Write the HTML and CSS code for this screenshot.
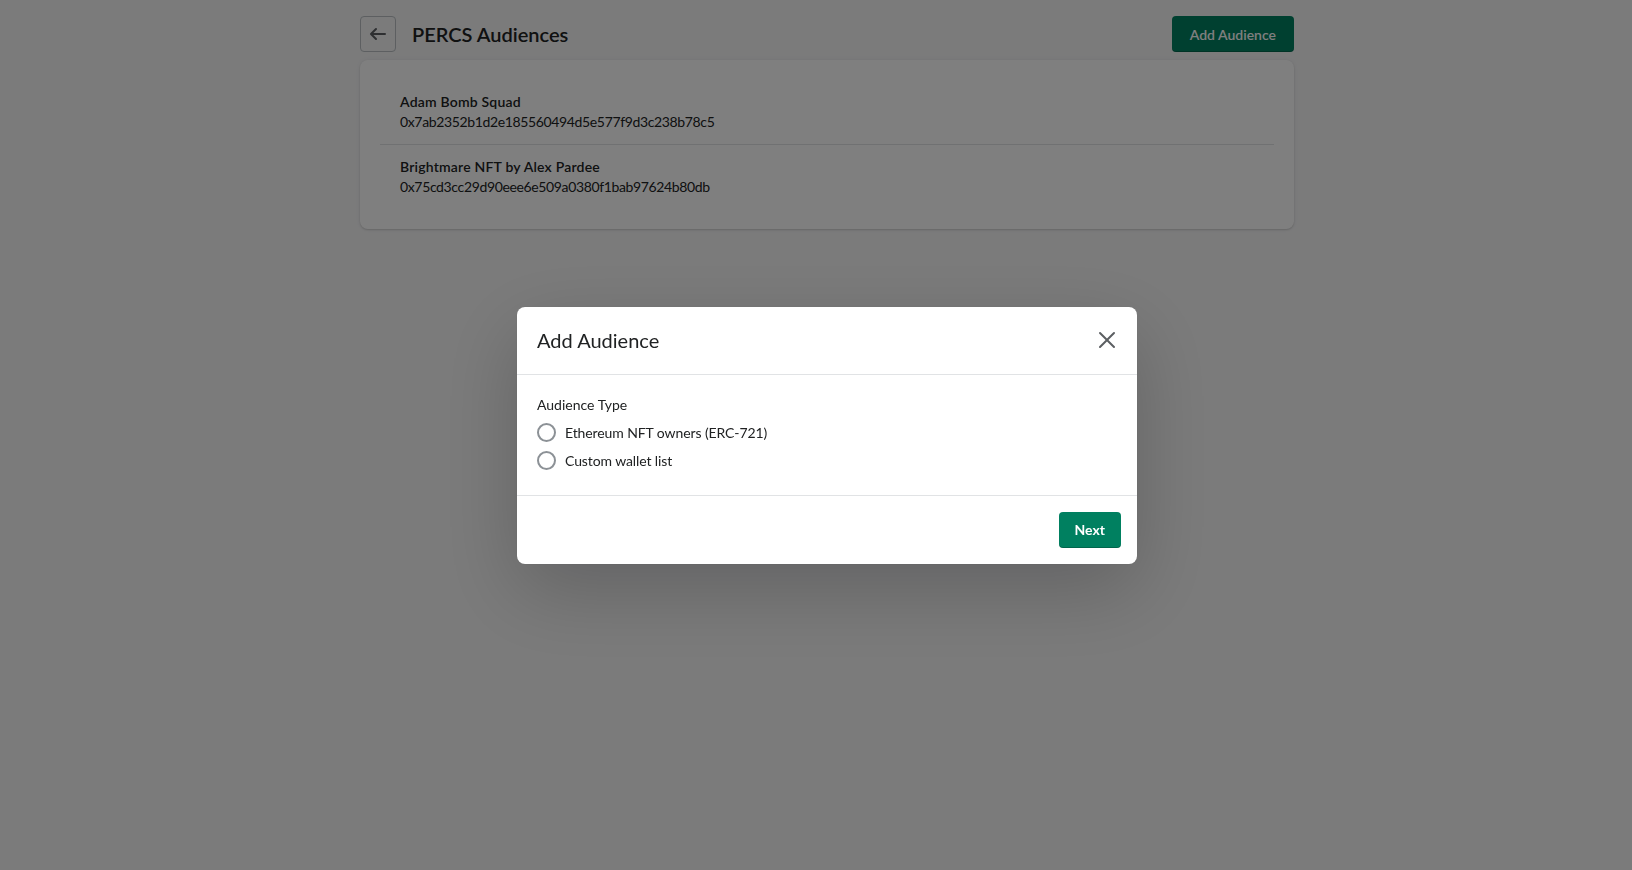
FILE: index.html
```html
<!DOCTYPE html>
<html lang="en">
<head>
<meta charset="utf-8">
<title>PERCS Audiences</title>
<link rel="stylesheet" href="styles.css">
</head>
<body>
<div class="app">
  <div class="page">
    <header class="page-header">
      <div class="title-group">
        <button class="back-btn" aria-label="Back">
          <svg width="20" height="20" viewBox="0 0 20 20"><path d="M17 9H5.414l3.293-3.293a.999.999 0 1 0-1.414-1.414l-5 5a.999.999 0 0 0 0 1.414l5 5a.997.997 0 0 0 1.414 0 .999.999 0 0 0 0-1.414L5.414 11H17a1 1 0 1 0 0-2z" fill="#5c5f62"/></svg>
        </button>
        <h1 class="page-title">PERCS Audiences</h1>
      </div>
      <button class="btn-primary">Add Audience</button>
    </header>
    <section class="card">
      <ul class="list">
        <li class="item">
          <div class="item-name">Adam Bomb Squad</div>
          <div class="item-addr">0x7ab2352b1d2e185560494d5e577f9d3c238b78c5</div>
        </li>
        <li class="item">
          <div class="item-name">Brightmare NFT by Alex Pardee</div>
          <div class="item-addr">0x75cd3cc29d90eee6e509a0380f1bab97624b80db</div>
        </li>
      </ul>
    </section>
  </div>
</div>
<div class="backdrop"></div>
<div class="modal-wrap">
  <div class="modal">
    <div class="modal-header">
      <h2 class="modal-title">Add Audience</h2>
      <button class="close-btn" aria-label="Close">
        <svg width="20" height="20" viewBox="0 0 20 20"><path d="M11.414 10l6.293-6.293a1 1 0 1 0-1.414-1.414L10 8.586 3.707 2.293a1 1 0 0 0-1.414 1.414L8.586 10l-6.293 6.293a1 1 0 1 0 1.414 1.414L10 11.414l6.293 6.293A.998.998 0 0 0 18 17a.999.999 0 0 0-.293-.707L11.414 10z" fill="#5c5f62"/></svg>
      </button>
    </div>
    <div class="modal-body">
      <div class="field-label">Audience Type</div>
      <label class="choice"><span class="radio"></span><span>Ethereum NFT owners (ERC-721)</span></label>
      <label class="choice"><span class="radio"></span><span>Custom wallet list</span></label>
    </div>
    <div class="modal-footer">
      <button class="btn-next">Next</button>
    </div>
  </div>
</div>
</body>
</html>
```
FILE: styles.css
```css
* { box-sizing: border-box; }
html, body { margin: 0; padding: 0; }
body {
  background: #f6f6f7;
  font-family: "Segoe UI", "Lato", "Noto Sans", sans-serif;
  color: #202223;
  font-size: 14px;
  line-height: 20px;
  height: 870px;
  overflow: hidden;
}
button { font-family: inherit; cursor: pointer; }
.app { padding-left: 22px; }
.page { width: 934px; margin: 0 auto; padding-top: 16px; }
.page-header {
  display: flex;
  justify-content: space-between;
  align-items: center;
  height: 36px;
  margin-bottom: 8px;
}
.title-group { display: flex; align-items: center; gap: 16px; }
.back-btn {
  width: 36px; height: 36px;
  border: 1px solid #babfc3;
  border-radius: 4px;
  background: transparent;
  display: flex; align-items: center; justify-content: center;
  padding: 0;
}
.page-title { margin: 0; font-size: 20px; font-weight: 600; line-height: 28px; }
.btn-primary {
  height: 36px;
  padding: 0 18px;
  background: #008060;
  color: #fff;
  border: none;
  border-radius: 4px;
  font-size: 14px;
  font-weight: 600;
  box-shadow: inset 0 -1px 0 rgba(0,0,0,0.2);
}
.card {
  background: #fff;
  border-radius: 8px;
  box-shadow: 0 0 5px rgba(23,24,24,0.05), 0 1px 2px rgba(0,0,0,0.15);
  padding: 20px;
}
.list { list-style: none; margin: 0; padding: 0; }
.item { padding: 12px 20px; }
.item + .item { border-top: 1px solid #e1e3e5; }
.item-name { font-weight: 600; letter-spacing: 0.2px; }
.item-addr { letter-spacing: -0.36px; }
.backdrop { position: fixed; inset: 0; background: rgba(0,0,0,0.5); }
.modal-wrap {
  position: fixed; inset: 0;
  display: flex; align-items: center; justify-content: center;
  padding-left: 22px;
}
.modal {
  width: 620px;
  background: #fff;
  border-radius: 8px;
  box-shadow: 0 26px 80px rgba(0,0,0,0.2), 0 0 1px rgba(0,0,0,0.2);
}
.modal-header {
  height: 68px;
  display: flex; align-items: center; justify-content: space-between;
  padding: 0 20px;
  border-bottom: 1px solid #e1e3e5;
}
.modal-title { margin: 0; font-size: 20px; font-weight: 400; line-height: 28px; }
.close-btn {
  width: 28px; height: 28px; border: none; background: transparent;
  display: flex; align-items: center; justify-content: center; padding: 0;
  margin-right: -4px;
}
.modal-body { padding: 20px; }
.field-label { margin-bottom: 4px; }
.choice { display: flex; align-items: center; gap: 9px; height: 28px; }
.radio {
  width: 19px; height: 19px; border-radius: 50%;
  border: 2px solid #8c9196;
  flex-shrink: 0;
}
.choice span:last-child { letter-spacing: -0.1px; }
.modal-footer {
  display: flex; justify-content: flex-end;
  padding: 16px;
  border-top: 1px solid #e1e3e5;
}
.btn-next {
  height: 36px; padding: 0 16px;
  background: #008060; color: #fff;
  border: none; border-radius: 4px;
  font-size: 14px; font-weight: 700;
  box-shadow: inset 0 -1px 0 rgba(0,0,0,0.2);
}
```
